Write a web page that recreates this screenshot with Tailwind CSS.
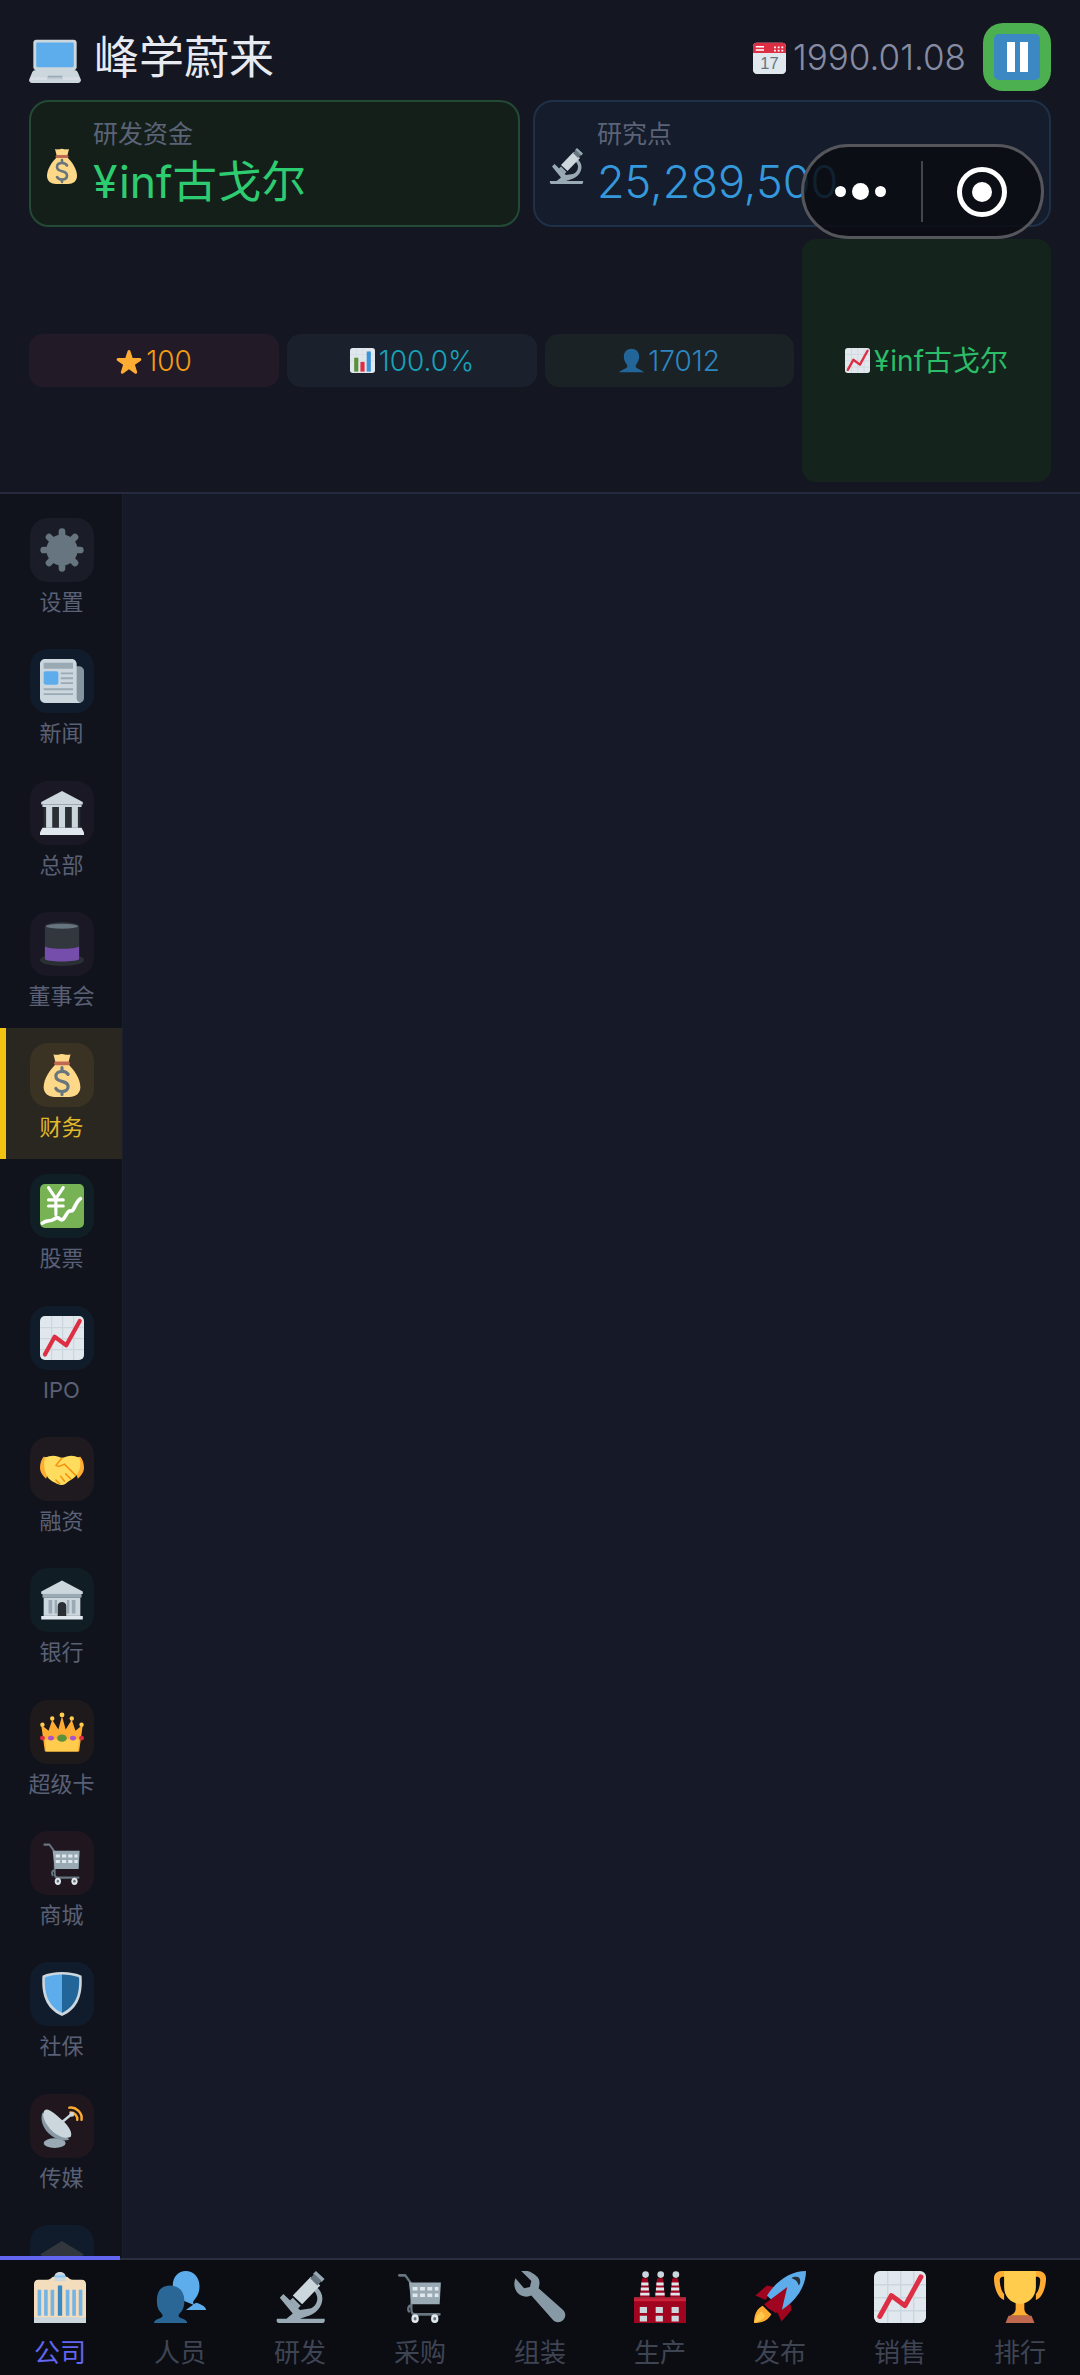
<!DOCTYPE html>
<html lang="zh">
<head>
    <meta charset="UTF-8">
    <meta name="viewport" content="width=device-width, initial-scale=1.0">
    <title>峰学蔚来</title>
    <script src="https://cdn.jsdelivr.net/npm/@tailwindcss/browser@4"></script>
</head>
<body class="h-screen overflow-hidden flex flex-col bg-[#161a28] font-['Inter','Noto_Sans_CJK_SC',sans-serif] font-light">
    <!-- icon sheet, twemoji-like shapes on a 36 grid -->
    <svg class="hidden" xmlns="http://www.w3.org/2000/svg">
        <symbol id="i-laptop" viewBox="0 0 36 36"><path fill="#CCD6DD" d="M34 29.1c-.4-1-.9-2-2-2h-1c1.1 0 2-.9 2-2V8c0-1.100-.9-2-2-2H5C3.900 6 3 6.900 3 8v17.100c0 1.100.9 2 2 2H4c-1.100 0-1.700 1-2 2l-2 4.900C0 35.100.9 36 2 36h32c1.100 0 2-.9 2-2l-2-4.900z"/><path fill="#5DADEC" d="M31 24.100c0 .5-.4 1-1 1H6c-.6 0-1-.5-1-1V9c0-.6.4-1 1-1h24c.6 0 1 .4 1 1v15.100z"/><path fill="#99AAB5" d="M13 31h10l.5 2.500h-11z"/><path fill="#E1E8ED" d="M1.500 32h33l.5 2H1z" opacity=".5"/></symbol>
        <symbol id="i-bag" viewBox="0 0 36 36"><path fill="#FDD888" d="M13 9C8 14 3 21 3 28c0 5 4 8 9 8h12c5 0 9-3 9-8 0-7-5-14-10-19z"/><path fill="#FDD888" d="M11 1c2 1 3 0 4 .5 1.500-1 4-1 6 0 1-.5 2 .5 4-.5l-2 8H13z"/><rect x="11.500" y="7" width="13" height="3" rx="1.500" fill="#BF6952"/><path fill="none" stroke="#67757F" stroke-width="2.600" stroke-linecap="round" d="M23 17.500c-1-1.800-3-2.500-5-2.500-3 0-5 1.600-5 4s2 3.500 5 4.200 5 1.800 5 4.300-2 4-5 4c-2 0-4-.8-5-2.500M18 12v3M18 31.500V34"/></symbol>
        <symbol id="i-micro" viewBox="0 0 36 36"><path fill="#99AAB5" d="M2 33h33c.5 1.500 0 3-1.500 3h-30C2 36 1.500 34.500 2 33zM4 18.500 6.500 16 18 27l7-1c3-1 5-4 5-7 0-2-1-4-2.500-5.500l2-2.500c2.500 2 4 5 4 8 0 6-5 11-11 12.500-3 .8-5 2-8 2H8l5-4z"/><path fill="#CCD6DD" d="M13 17 25.500 4 32 10 19.500 23z"/><path fill="#99AAB5" d="M13 18.500l5.500 5.500-2 2L11 20.500zM27 2l2-2 6 5.500-2 2.200z"/><path fill="#66757F" d="M25 5l3-3 5 5-3 3z"/></symbol>
        <symbol id="i-cal" viewBox="0 0 36 36"><path fill="#E1E8ED" d="M36 32c0 2.200-1.800 4-4 4H4c-2.200 0-4-1.800-4-4V6c0-2.200 1.800-4 4-4h28c2.200 0 4 1.800 4 4z"/><path fill="#DD2E44" d="M36 13V6c0-2.200-1.800-4-4-4H4C1.800 2 0 3.800 0 6v7z"/><path fill="#fff" d="M3 5.500h9v1.500H3zM3 9h9v1.500H3zM23 6h2v2h-2zM27 6h2v2h-2zM31 6h2v2h-2zM23 9.500h2v2h-2zM27 9.500h2v2h-2zM31 9.500h2v2h-2z"/><text x="18" y="31" text-anchor="middle" font-size="18" fill="#66757F" font-family="Liberation Sans">17</text></symbol>
        <symbol id="i-star" viewBox="0 0 36 36"><path fill="#FFAC33" d="M27.300 35.600c-.4 0-.8-.1-1.200-.4L18 29.300l-8.100 5.900c-.7.500-1.700.5-2.400 0-.7-.5-1-1.500-.7-2.300l3-9.600-8.100-5.700c-.7-.5-1-1.500-.7-2.300.3-.8 1-1.400 1.900-1.400l10-.1 3.200-9.600c.3-.8 1-1.400 1.900-1.400s1.600.6 1.900 1.400l3.200 9.600 10 .1c.9 0 1.600.6 1.900 1.400.3.800 0 1.800-.7 2.300l-8.100 5.700 3 9.600c.3.800 0 1.800-.7 2.300-.3.300-.7.400-1.200.4z"/></symbol>
        <symbol id="i-bars" viewBox="0 0 36 36"><rect y="0" width="36" height="36" rx="4" fill="#E1E8ED"/><path fill="#CCD6DD" d="M9 0h1v36H9zM18 0h1v36h-1zM27 0h1v36h-1zM0 9h36v1H0zM0 18h36v1H0z" opacity=".6"/><rect x="6" y="14" width="6" height="20" fill="#5C913B"/><rect x="15" y="20" width="6" height="14" fill="#DD2E44"/><rect x="24" y="5" width="6" height="29" fill="#3B94D9"/></symbol>
        <symbol id="i-bust" viewBox="0 0 36 36"><path fill="#269" d="M24 26.500c0-1.800 1-3.200 2-4.700 1.500-2 3-4.500 3-9.800C29 5 24 1 18 1S7 5 7 12c0 5.300 1.500 7.800 3 9.800 1 1.500 2 2.900 2 4.700 0 3-8 4-12 8.500h36c-4-4.500-12-5.500-12-8.500z"/></symbol>
        <symbol id="i-chart" viewBox="0 0 36 36"><rect y="0" width="36" height="36" rx="4" fill="#E1E8ED"/><path fill="#CCD6DD" d="M9 0h1v36H9zM18 0h1v36h-1zM27 0h1v36h-1zM0 9h36v1H0zM0 18h36v1H0zM0 27h36v1H0z"/><path fill="none" stroke="#DD2E44" stroke-width="3.400" stroke-linecap="round" stroke-linejoin="round" d="M4 31.500 12 17l9.500 7L32.500 4"/></symbol>
        <symbol id="i-gear" viewBox="0 0 36 36"><g stroke="#66757F" stroke-width="5.500" stroke-linecap="round"><path d="M18 3v30M3 18h30M7.400 7.400l21.200 21.200M28.600 7.400 7.400 28.600"/></g><circle cx="18" cy="18" r="9.500" fill="none" stroke="#66757F" stroke-width="6.500"/></symbol>
        <symbol id="i-news" viewBox="0 0 36 36"><path fill="#99AAB5" d="M32 6h-6v30h6c2.200 0 4-1.800 4-4V10c0-2.200-1.800-4-4-4z" opacity=".85"/><path fill="#CCD6DD" d="M30 32c0 2.200 1.800 4 4 4H4c-2.200 0-4-1.800-4-4V4c0-2.200 1.800-4 4-4h22c2.200 0 4 1.800 4 4z"/><path fill="#99AAB5" d="M3 3h24v5H3zM17 11h10v1.500H17zM17 15h10v1.500H17zM17 19h10v1.500H17zM3 24h24v1.500H3zM3 28h24v1.500H3z"/><rect x="3" y="10" width="12" height="11" rx="1.500" fill="#5DADEC"/></symbol>
        <symbol id="i-temple" viewBox="0 0 36 36"><path fill="#CCD6DD" d="M18 0 1 9v2h34V9z"/><rect x="3" y="13" width="30" height="17" fill="#292F33"/><path fill="#CCD6DD" d="M2 11h32v2H2zM5 13h5v17H5zM15.500 13h5v17h-5zM26 13h5v17h-5z"/><path fill="#E1E8ED" d="M2 30h32l2 4v2H0v-2z"/></symbol>
        <symbol id="i-hat" viewBox="0 0 36 36"><ellipse cx="18" cy="31" rx="18" ry="5" fill="#292F33"/><path fill="#31373D" d="M4 4c0-5 28-5 28 0v26c0 3-28 3-28 0z"/><path fill="#744EAA" d="M4 20c5 2.500 23 2.500 28 0v10c0 3-28 3-28 0z"/><ellipse cx="18" cy="3.500" rx="13" ry="2" fill="#66757F"/></symbol>
        <symbol id="i-stock" viewBox="0 0 36 36"><rect width="36" height="36" rx="4" fill="#77B255"/><path fill="none" stroke="#fff" stroke-width="2.600" stroke-linecap="round" d="M7 3l6 9 6-9M13 12v13M7 13h12M7 18h12"/><path fill="none" stroke="#fff" stroke-width="3" stroke-linecap="round" stroke-linejoin="round" d="M2 32c4-3 6-1 9-3s3-2 6 0 5-8 8-7 3-6 8-10"/></symbol>
        <symbol id="i-hands" viewBox="0 0 36 36"><path fill="#FFAC33" d="M3 8C1 10 0 14 0 17c0 4 3 7 5 9l6-17z"/><path fill="#FFAC33" d="M33 8c2 2 3 6 3 9 0 4-3 7-5 9l-6-17z"/><path fill="#FFDC5D" d="M4 9c5-3 10-2 14 0 5-2 9-3 14 0 2 4 1 10-2 14-2 3-7 5-9 7-3 2-6 1-9-1-4-2-6-4-7-7C3 18 3 13 4 9z"/><path fill="none" stroke="#F4900C" stroke-width="1.200" stroke-linecap="round" d="M18 9l-5 6c2 2 5 0 7-1l9 9M16 30l-3-3M20 28l-3-4M25 26l-4-4"/></symbol>
        <symbol id="i-bank" viewBox="0 0 36 36"><path fill="#CCD6DD" d="M18 2 1 11v2h34v-2z"/><rect x="2" y="13" width="32" height="3" fill="#99AAB5"/><rect x="3" y="16" width="30" height="15" fill="#CCD6DD"/><path fill="#99AAB5" d="M7 18h3v11H7zM26 18h3v11h-3zM12 18h2v11h-2zM22 18h2v11h-2z"/><path fill="#292F33" d="M14.500 31v-8c0-4.500 7-4.500 7 0v8z"/><path fill="#E1E8ED" d="M1 31h34v3H1z"/></symbol>
        <symbol id="i-crown" viewBox="0 0 36 36"><path fill="#FFAC33" d="M1 12l6 5 3-9 5 8 3-11 3 11 5-8 3 9 6-5-3 22H4z"/><path fill="#FFCC4D" d="M4 24h28l-1 10H5z"/><circle cx="2" cy="12" r="1.800" fill="#FFCC4D"/><circle cx="34" cy="12" r="1.800" fill="#FFCC4D"/><circle cx="10" cy="7" r="1.800" fill="#FFCC4D"/><circle cx="26" cy="7" r="1.800" fill="#FFCC4D"/><circle cx="18" cy="4" r="2" fill="#FFCC4D"/><circle cx="2" cy="23" r="2" fill="#DD2E44"/><circle cx="34" cy="23" r="2" fill="#DD2E44"/><ellipse cx="9" cy="23" rx="2.500" ry="2" fill="#AA55CC"/><ellipse cx="27" cy="23" rx="2.500" ry="2" fill="#AA55CC"/><ellipse cx="18" cy="23" rx="4" ry="3" fill="#5C913B"/></symbol>
        <symbol id="i-cart" viewBox="0 0 36 36"><g transform="translate(2.700 0) scale(.85 1)"><path fill="none" stroke="#66757F" stroke-width="1.800" stroke-linecap="round" stroke-linejoin="round" d="M1 3h5l5 6v18c0 2 1 3 3 3h20M11 24c-3 0-3 3-2 4"/><path fill="#99AAB5" d="M9 8h26l-1 15H11z"/><path fill="#E1E8ED" d="M12 11h4v2.500h-4zM18 11h4v2.500h-4zM24 11h4v2.500h-4zM30 11h3v2.500h-3zM12 15.500h4V18h-4zM18 15.500h4V18h-4zM24 15.500h4V18h-4zM30 15.500h3V18h-3z"/><circle cx="14" cy="33" r="3" fill="#E1E8ED"/><circle cx="30" cy="33" r="3" fill="#E1E8ED"/><circle cx="14" cy="33" r="1.200" fill="#66757F"/><circle cx="30" cy="33" r="1.200" fill="#66757F"/></g></symbol>
        <symbol id="i-shield" viewBox="0 0 36 36"><path fill="#CCD6DD" d="M18 0C12 0 6 1 2 3c-1 14 2 27 16 33C32 30 35 17 34 3c-4-2-10-3-16-3z"/><path fill="#5DADEC" d="M18 2C13 2 8 3 4 4.500 3.500 17 6 27.500 18 33.500z"/><path fill="#226699" d="M18 2c5 0 10 1 14 2.500.5 12.500-2 23-14 29z"/></symbol>
        <symbol id="i-dish" viewBox="0 0 36 36"><path fill="none" stroke="#FFAC33" stroke-width="2" stroke-linecap="round" d="M24 3c5-1 11 4 10 10M25 7c3 0 6 2.500 5.500 6"/><ellipse cx="12" cy="32" rx="9" ry="4" fill="#99AAB5"/><path fill="#8899A6" d="M2 7c-2 5 0 12 5 17s12 7 17 5z"/><path fill="#CCD6DD" d="M4 5C1 8 3 14 8 20s13 9 17 7c2-3-1-9-7-14S7 3 4 5z"/><path stroke="#CCD6DD" stroke-width="2" d="M13 19 25 9"/><circle cx="26" cy="8.500" r="2" fill="#CCD6DD"/></symbol>
        <symbol id="i-cap" viewBox="0 0 36 36"><path fill="#31373D" d="M18 5 0 16l18 11 18-11z"/><path stroke="#FFAC33" stroke-width="2" d="M9 26l5-5"/></symbol>
        <symbol id="i-office" viewBox="0 0 36 36"><path fill="#F4DDBD" d="M0 9c0-1.500 1-3 3-3h6c2 0 3-1 4-2h10c1 1 2 2 4 2h6c2 0 3 1.500 3 3v27H0z"/><path fill="#CCD6DD" d="M14 4.500c0-5 8-5 8 0V7h-8z"/><rect x="14.500" y="3" width="7" height="1.500" fill="#88C9F9"/><path fill="#5DADEC" d="M2.500 13h2.500v18H2.500zM7 13h2.500v18H7zM11.500 13H14v18h-2.500zM22 13h2.500v18H22zM26.500 13H29v18h-2.500zM31 13h2.500v18H31z" opacity=".85"/><path fill="#3B88C3" d="M16.500 10h3v21h-3z"/><path fill="#CCD6DD" d="M0 32h36v4H0z"/></symbol>
        <symbol id="i-busts" viewBox="0 0 36 36"><path fill="#5DADEC" d="M27 22c0-1 1-2 2-3.500 1.500-2 2.500-4.500 2.500-8C31.500 4 27 0 22 0s-9 4-9 10c0 4 1 6.500 2.500 8.500L36 27c0-2-9-3-9-5z"/><path fill="#5DADEC" d="M22 27h14c0-2-3-4-7-5z"/><path fill="#2A6797" d="M17 31c0-1 1-2 2-3 1.500-2 2-4 2-7.500C21 14 17 10 11 10S2 14 2 20.500c0 3.500.5 5.500 2 7.500 1 1 2 2 2 3 0 2-6 2-6 5h23c0-3-6-3-6-5z"/></symbol>
        <symbol id="i-wrench" viewBox="0 0 36 36"><path fill="#8899A6" d="M1 5c-2 5 0 10 4 12 2 1 5 1 7 0l15 17c2 2 5 2 7 0s2-5 0-7L17 12c1-3 1-6-1-8-3-3-7-5-11-4l7 7-1 4-4 1z"/></symbol>
        <symbol id="i-factory" viewBox="0 0 36 36"><path fill="#A0041E" d="M0 19h36v17H0z"/><path fill="#DD2E44" d="M0 18h36v3H0z" opacity=".7"/><path fill="#CCD6DD" d="M4 25h5v4H4zM15 25h5v4h-5zM26 25h5v4h-5zM4 31h5v4H4zM15 31h5v4h-5zM26 31h5v4h-5z"/><path fill="#A0041E" d="M5.500 5h4l1.500 13H4zM16 5h4l1.500 13h-7zM26.500 5h4L32 18h-7z"/><path fill="#E1E8ED" d="M5 8h5v2H5zM4.700 11.500h5.600v2H4.700zM4.300 15h6.400v2H4.300zM15.500 8h5v2h-5zM15.200 11.500h5.600v2h-5.600zM14.800 15h6.400v2h-6.400zM26 8h5v2h-5zM25.700 11.500h5.600v2h-5.600zM25.300 15h6.400v2h-6.400z"/><circle cx="8" cy="2.500" r="2.300" fill="#CCD6DD"/><circle cx="18.500" cy="2.500" r="2.300" fill="#CCD6DD"/><circle cx="29" cy="2.500" r="2.300" fill="#CCD6DD"/></symbol>
        <symbol id="i-rocket" viewBox="0 0 36 36"><path fill="#A0041E" d="M1 17l8-7 5 1-6 9zM19 35l7-8-1-5-9 6z"/><path fill="#FFAC33" d="M0 36c0-6 2-10 6-12l6 6c-2 4-6 6-12 6z"/><path fill="#FFCC4D" d="M0 36c1-3 2-6 5-8l3 3c-2 3-5 4-8 5z" opacity=".9"/><path fill="#5DADEC" d="M36 0C26 0 16 6 9 17l10 10C30 20 36 10 36 0z"/><path fill="#A0041E" d="M10 26l13-15-4 17-4 1zM10 26l-3-3 16-12z"/><path fill="#292F33" d="M29 4c2 0 3 1 3 3 0 1 0 2-1 3-1-3-2-4-5-5 1-1 2-1 3-1z"/></symbol>
        <symbol id="i-trophy" viewBox="0 0 36 36"><path fill="#FFAC33" d="M5.100 0H31c2.500 0 5 2 5 5 0 7-3 14-7 15v-4c2-2 3-7 3-10 0-1-1-2-2-2H6C5 4 4 5 4 6c0 3 1 8 3 10v4C3 19 0 12 0 5c0-3 2.500-5 5.100-5z"/><path fill="#FFAC33" d="M15 20h6v6c0 3 2 4 4 5H11c2-1 4-2 4-5z"/><path fill="#FFCC4D" d="M7 0h22v11c0 7-5 11-11 12-6-1-11-5-11-12z"/><path fill="#C1694F" d="M10 31h16l2 5H8z"/></symbol>
    </svg>

    <!-- top bar -->
    <header class="relative shrink-0 h-[494px] bg-[#141722] border-b-2 border-[#262a3e] px-[29px] pt-[23px]">
        <div class="flex items-center h-[68px]">
            <svg class="w-[52px] h-[52px]"><use href="#i-laptop"/></svg>
            <h1 class="ml-[13px] text-[45px] leading-none font-normal text-[#e8eaf2]">峰学蔚来</h1>
            <div class="ml-auto flex items-center gap-[7px] text-[35px] text-[#878ca3]">
                <svg class="w-[33px] h-[33px]"><use href="#i-cal"/></svg>
                <span>1990.01.08</span>
            </div>
            <button class="ml-[17px] w-[68px] h-[68px] rounded-[20px] bg-[#4caf50] flex items-center justify-center">
                <span class="w-[46px] h-[46px] rounded-[5px] bg-[#3b88c3] flex items-center justify-center gap-[5px]">
                    <span class="w-[8px] h-[30px] bg-white"></span>
                    <span class="w-[8px] h-[30px] bg-white"></span>
                </span>
            </button>
        </div>
        <div class="flex gap-[13px] mt-[9px]">
            <div class="w-[491px] h-[127px] rounded-[20px] border-2 border-[#234a34] bg-[#141f1a] flex items-center pl-[13px]">
                <svg class="w-[36px] h-[40px] mt-[4px]"><use href="#i-bag"/></svg>
                <div class="ml-[13px]">
                    <p class="text-[25px] leading-[32px] font-normal text-[#5b6377]">研发资金</p>
                    <p class="mt-[4px] text-[44.5px] leading-[56px] font-normal text-[#2ecc71]">¥inf古戈尔</p>
                </div>
            </div>
            <div class="w-[518px] h-[127px] rounded-[20px] border-2 border-[#1f3148] bg-[#151c2b] flex items-center pl-[13px]">
                <svg class="w-[36px] h-[40px] mt-[4px]"><use href="#i-micro"/></svg>
                <div class="ml-[13px]">
                    <p class="text-[25px] leading-[32px] font-normal text-[#5b6377]">研究点</p>
                    <p class="mt-[4px] text-[45px] leading-[56px] text-[#3498db]">25,289,500</p>
                </div>
            </div>
        </div>
        <div class="flex items-center gap-[8px] mt-[12px] h-[243px]">
            <div class="w-[250px] h-[53px] rounded-[14px] bg-[#231a28] flex items-center justify-center gap-[4px] text-[28px] text-[#f39c12]">
                <svg class="w-[26px] h-[26px]"><use href="#i-star"/></svg><span>100</span>
            </div>
            <div class="w-[250px] h-[53px] rounded-[14px] bg-[#1a202c] flex items-center justify-center gap-[4px] text-[28px] text-[#17a2b8]">
                <svg class="w-[25px] h-[25px]"><use href="#i-bars"/></svg><span>100.0%</span>
            </div>
            <div class="w-[249px] h-[53px] rounded-[14px] bg-[#1a2226] flex items-center justify-center gap-[4px] text-[28px] text-[#2e86c1]">
                <svg class="w-[25px] h-[25px]"><use href="#i-bust"/></svg><span>17012</span>
            </div>
            <div class="w-[249px] h-[243px] rounded-[14px] bg-[#14231b] flex items-center justify-center gap-[4px] text-[28px] font-normal text-[#2bbd68]">
                <svg class="w-[25px] h-[25px]"><use href="#i-chart"/></svg><span>¥inf古戈尔</span>
            </div>
        </div>
        <!-- wechat capsule floats over the header -->
        <div class="absolute left-[801px] top-[144px] w-[243px] h-[95px] rounded-full border-[3px] border-[#55565c] bg-[#0b0c12]/85 flex items-center">
            <div class="flex-1 flex items-center justify-center gap-[6px] pr-[4px]">
                <span class="w-[11px] h-[11px] rounded-full bg-white"></span>
                <span class="w-[17px] h-[17px] rounded-full bg-white"></span>
                <span class="w-[11px] h-[11px] rounded-full bg-white"></span>
            </div>
            <span class="w-[2px] h-[61px] bg-[#45464d]"></span>
            <div class="w-[118px] flex items-center justify-center">
                <span class="w-[50px] h-[50px] rounded-full border-[5px] border-white flex items-center justify-center">
                    <span class="w-[20px] h-[20px] rounded-full bg-white"></span>
                </span>
            </div>
        </div>
    </header>

    <div class="flex flex-1 min-h-0">
        <nav id="side" class="w-[123px] shrink-0 overflow-hidden bg-[#10131c] border-r border-[#1a1e2b] pt-[9px]"></nav>
        <main class="flex-1 bg-[#161a28]"></main>
    </div>

    <footer id="tabs" class="relative shrink-0 h-[117px] bg-[#0b0d13] border-t-2 border-[#2a2e40] flex"></footer>

    <script>
        const sideItems = [
            { icon: 'i-gear', label: '设置', tint: 'bg-[#1a1d27]' },
            { icon: 'i-news', label: '新闻', tint: 'bg-[#101c2c]' },
            { icon: 'i-temple', label: '总部', tint: 'bg-[#1b1826]' },
            { icon: 'i-hat', label: '董事会', tint: 'bg-[#1b1826]' },
            { icon: 'i-bag', label: '财务', tint: 'bg-[#3a3324]', active: true },
            { icon: 'i-stock', label: '股票', tint: 'bg-[#101f26]' },
            { icon: 'i-chart', label: 'IPO', tint: 'bg-[#111c2a]' },
            { icon: 'i-hands', label: '融资', tint: 'bg-[#1f1a20]' },
            { icon: 'i-bank', label: '银行', tint: 'bg-[#111d24]' },
            { icon: 'i-crown', label: '超级卡', tint: 'bg-[#1e1a1c]' },
            { icon: 'i-cart', label: '商城', tint: 'bg-[#1f161f]' },
            { icon: 'i-shield', label: '社保', tint: 'bg-[#101c2c]' },
            { icon: 'i-dish', label: '传媒', tint: 'bg-[#1f161e]' },
            // last one runs under the tab bar, its label is out of view
            { icon: 'i-cap', label: '', tint: 'bg-[#101c2c]' },
        ];
        const tabItems = [
            { icon: 'i-office', label: '公司', active: true },
            { icon: 'i-busts', label: '人员' },
            { icon: 'i-micro', label: '研发' },
            { icon: 'i-cart', label: '采购' },
            { icon: 'i-wrench', label: '组装' },
            { icon: 'i-factory', label: '生产' },
            { icon: 'i-rocket', label: '发布' },
            { icon: 'i-chart', label: '销售' },
            { icon: 'i-trophy', label: '排行' },
        ];

        document.querySelector('#side').innerHTML = sideItems.map(item => `
            <div class="h-[131.3px] flex flex-col items-center pt-[15px] border-l-[6px] ${item.active ? 'border-[#f1c40f] bg-[#2a2620]' : 'border-transparent'}">
                <div class="-ml-[5px] w-[64px] h-[64px] shrink-0 rounded-[18px] flex items-center justify-center ${item.tint}">
                    <svg class="w-[44px] h-[44px]"><use href="#${item.icon}"/></svg>
                </div>
                <span class="-ml-[5px] mt-[5px] text-[22px] leading-[30px] font-normal ${item.active ? 'text-[#e0b92a]' : 'text-[#5a6075]'}">${item.label}</span>
            </div>
        `).join('');

        document.querySelector('#tabs').innerHTML = tabItems.map(item => `
            <div class="flex-1 flex flex-col items-center pt-[11px]">
                <svg class="w-[52px] h-[52px]"><use href="#${item.icon}"/></svg>
                <span class="mt-[13px] text-[26px] leading-[34px] font-normal ${item.active ? 'text-[#6366f1]' : 'text-[#3f4453]'}">${item.label}</span>
            </div>
        `).join('') + '<span class="absolute left-0 -top-[4px] w-[120px] h-[4px] bg-[#6366f1]"></span>';
    </script>
</body>
</html>
